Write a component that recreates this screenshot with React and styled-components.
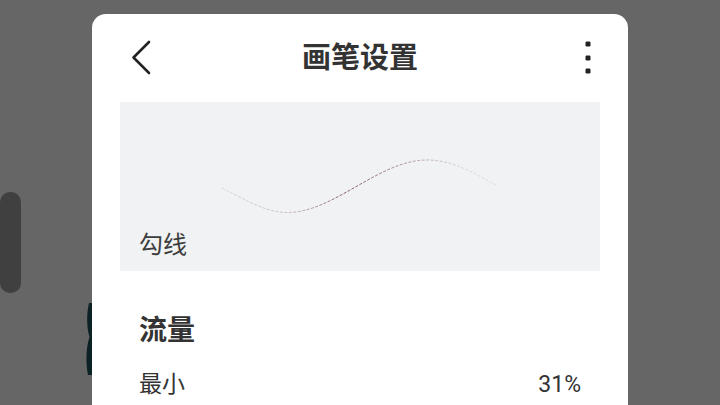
import styled, { createGlobalStyle } from 'styled-components';

const GlobalStyle = createGlobalStyle`
  html, body {
    margin: 0;
    padding: 0;
    background: #666666;
  }
  * { box-sizing: border-box; }
`;

const Screen = styled.div`
  position: relative;
  width: 720px;
  height: 405px;
  overflow: hidden;
  background: #666666;
  display: flex;
  justify-content: center;
  align-items: flex-start;
  padding-top: 14px;
  font-family: Roboto, "Noto Sans CJK SC", sans-serif;
  color: #333333;
`;

const SideHandle = styled.div`
  position: absolute;
  left: 0;
  top: 192px;
  width: 21px;
  height: 101px;
  border-radius: 10px;
  background: #404040;
`;

const PeekShape = styled.svg`
  position: absolute;
  left: 80px;
  top: 295px;
  width: 20px;
  height: 90px;
`;

const Panel = styled.div`
  position: relative;
  z-index: 1;
  width: 536px;
  min-height: 440px;
  background: #ffffff;
  border-radius: 14px 14px 0 0;
  padding: 0 28px;
  display: flex;
  flex-direction: column;
`;

const Header = styled.div`
  height: 88px;
  display: grid;
  grid-template-columns: 40px 1fr 40px;
  align-items: center;
`;

const IconButton = styled.button`
  width: 40px;
  height: 40px;
  padding: 0;
  border: none;
  background: transparent;
  display: flex;
  cursor: pointer;
`;

const Title = styled.h1`
  margin: 0;
  text-align: center;
  font-size: 29px;
  font-weight: 700;
  line-height: 40px;
  color: #333333;
`;

const Preview = styled.div`
  height: 169px;
  background: #f1f2f4;
  display: flex;
  flex-direction: column;
  padding: 0 0 10px 19px;
`;

const Stroke = styled.svg`
  flex: 1;
  margin-left: -19px;
  width: calc(100% + 19px);
`;

const PreviewLabel = styled.div`
  font-size: 24px;
  line-height: 32px;
  color: #3d3d3d;
`;

const Section = styled.div`
  padding: 40px 19px 0;
  display: flex;
  flex-direction: column;
`;

const SectionTitle = styled.h2`
  margin: 0;
  font-size: 28px;
  font-weight: 700;
  line-height: 40px;
  color: #333333;
`;

const ValueRow = styled.div`
  margin-top: 17px;
  display: flex;
  justify-content: space-between;
  align-items: center;
  font-size: 23px;
  line-height: 34px;
  color: #333333;
`;

const App = () => {
  return (
    <>
      <GlobalStyle />
      <Screen>
        <SideHandle />
        <PeekShape viewBox="0 0 20 90">
          <path
            d="M9 8 C6.5 18, 6.5 32, 9.5 42 C6 52, 5.5 68, 8 80 L16 80 L16 8 Z"
            fill="#0c2123"
          />
        </PeekShape>
        <Panel>
          <Header>
            <IconButton aria-label="back">
              <svg width="40" height="40" viewBox="0 0 40 40">
                <path
                  d="M29 4 L13.5 19.5 L29 35"
                  fill="none"
                  stroke="#222222"
                  strokeWidth="2.6"
                  strokeLinecap="round"
                  strokeLinejoin="round"
                />
              </svg>
            </IconButton>
            <Title>画笔设置</Title>
            <IconButton aria-label="more">
              <svg width="40" height="40" viewBox="0 0 40 40">
                <rect x="25.5" y="3.5" width="5" height="5" rx="1.2" fill="#222222" />
                <rect x="25.5" y="17.5" width="5" height="5" rx="1.2" fill="#222222" />
                <rect x="25.5" y="30.5" width="5" height="5" rx="1.2" fill="#222222" />
              </svg>
            </IconButton>
          </Header>
          <Preview>
            <Stroke viewBox="0 0 480 127" preserveAspectRatio="none">
              <defs>
                <linearGradient id="ink" gradientUnits="userSpaceOnUse" x1="100" y1="0" x2="380" y2="0">
                  <stop offset="0" stopColor="#d4d0d2" />
                  <stop offset="0.25" stopColor="#bfb2b7" />
                  <stop offset="0.45" stopColor="#6a3545" />
                  <stop offset="0.65" stopColor="#9a8088" />
                  <stop offset="0.85" stopColor="#d6cfd2" />
                  <stop offset="1" stopColor="#dcd9db" />
                </linearGradient>
              </defs>
              <path
                d="M102 86 C135 103, 152 113, 176 110 C220 104, 262 58, 307 58 C335 58, 356 73, 378 84"
                fill="none"
                stroke="url(#ink)"
                strokeWidth="0.8"
                strokeDasharray="3 1.5"
              />
            </Stroke>
            <PreviewLabel>勾线</PreviewLabel>
          </Preview>
          <Section>
            <SectionTitle>流量</SectionTitle>
            <ValueRow>
              <span>最小</span>
              <span>31%</span>
            </ValueRow>
          </Section>
        </Panel>
      </Screen>
    </>
  );
};

export default App;
